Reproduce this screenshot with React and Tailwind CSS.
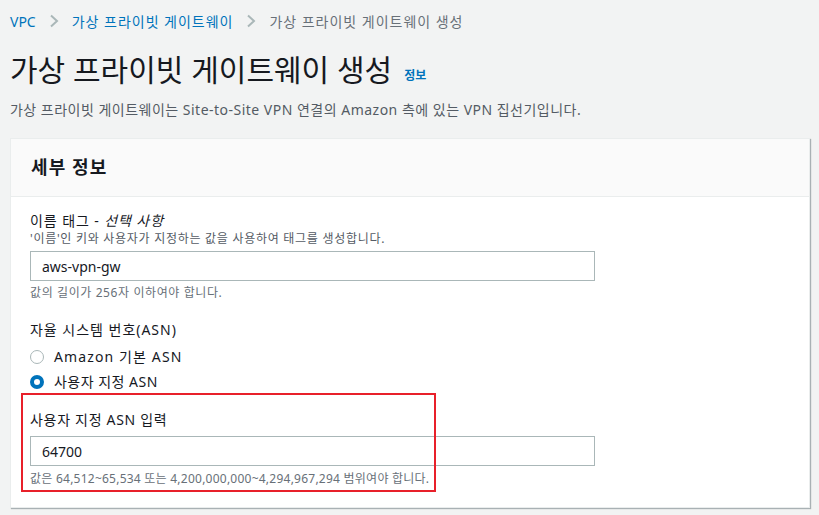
import React from "react";

const F = { fontFamily: '"Noto Sans", "Noto Sans CJK KR", sans-serif' };

function Chevron() {
  return (
    <svg width="12" height="14" viewBox="0 0 12 14" className="mx-[12px]">
      <path d="M3 1.5 L9 7 L3 12.5" fill="none" stroke="#aab7b8" strokeWidth="2" />
    </svg>
  );
}

function Radio({ checked, label, track }) {
  return (
    <div className="flex items-center h-[25px]">
      {checked ? (
        <span className="w-[14px] h-[14px] rounded-full border-[4px] border-[#0073bb] bg-white box-border" />
      ) : (
        <span className="w-[14px] h-[14px] rounded-full border-[1.5px] border-[#aab7b8] bg-white box-border" />
      )}
      <span className={"ml-[10px] text-[14px] text-[#16191f] " + track}>{label}</span>
    </div>
  );
}

export default function App() {
  return (
    <div className="w-[819px] h-[515px] bg-[#f2f3f3] overflow-hidden" style={F}>
      <div className="pl-[10px] pr-[9px]">
        <div className="flex items-center h-[20px] mt-[11px] text-[14px] tracking-[0.07em]">
          <span className="text-[#0073bb] tracking-normal">VPC</span>
          <Chevron />
          <span className="text-[#0073bb]">가상 프라이빗 게이트웨이</span>
          <Chevron />
          <span className="text-[#687078]">가상 프라이빗 게이트웨이 생성</span>
        </div>
        <div className="flex items-end h-[40px] mt-[19px]">
          <h1 className="text-[30px] leading-[40px] text-[#16191f] tracking-[0em] font-normal">가상 프라이빗 게이트웨이 생성</h1>
          <span className="ml-[12px] mb-[6px] text-[12px] font-bold text-[#0073bb] leading-[16px]">정보</span>
        </div>
        <p className="mt-[10px] text-[14px] leading-[20px] text-[#545b64] tracking-[0.035em]">
          가상 프라이빗 게이트웨이는 Site-to-Site VPN 연결의 Amazon 측에 있는 VPN 집선기입니다.
        </p>
        <div className="relative mt-[18px] bg-white border border-[#eaeded] shadow-[1px_1px_1px_0_rgba(0,28,36,0.3)] h-[370px]">
          <div className="h-[58px] bg-[#fafafa] border-b border-[#eaeded] flex items-center px-[20px]">
            <h2 className="text-[18px] font-bold text-[#16191f] tracking-[0.06em]">세부 정보</h2>
          </div>
          <div className="px-[19px] pt-[14px]">
            <div className="text-[14px] leading-[20px] text-[#16191f] tracking-[0.065em]">
              이름 태그 - <i>선택 사항</i>
            </div>
            <div className="text-[12px] leading-[16px] text-[#545b64] tracking-[0.06em]">
              '이름'인 키와 사용자가 지정하는 값을 사용하여 태그를 생성합니다.
            </div>
            <div className="mt-[4px] w-[565px] h-[30px] border border-[#aab7b8] flex items-center px-[11px] text-[14px] text-[#16191f]">
              aws-vpn-gw
            </div>
            <div className="mt-[4px] text-[12px] leading-[16px] text-[#687078] tracking-[0.05em]">
              값의 길이가 256자 이하여야 합니다.
            </div>
            <div className="mt-[19px] text-[14px] leading-[20px] text-[#16191f] tracking-[0.07em]">
              자율 시스템 번호(ASN)
            </div>
            <div className="mt-[4px]">
              <Radio label="Amazon 기본 ASN" track="tracking-[0.08em]" />
              <Radio checked label="사용자 지정 ASN" track="tracking-[0.035em]" />
            </div>
            <div className="mt-[16px] text-[14px] leading-[20px] text-[#16191f] tracking-[0.05em]">
              사용자 지정 ASN 입력
            </div>
            <div className="mt-[6px] w-[565px] h-[30px] border border-[#aab7b8] flex items-center px-[11px] text-[14px] text-[#16191f]">
              64700
            </div>
            <div className="mt-[5px] text-[12px] leading-[16px] text-[#687078] tracking-[0.02em]">
              값은 64,512~65,534 또는 4,200,000,000~4,294,967,294 범위여야 합니다.
            </div>
          </div>
          <div className="absolute left-[10px] top-[254px] w-[415px] h-[99px] border-2 border-[#e8202a] pointer-events-none" />
        </div>
      </div>
    </div>
  );
}
